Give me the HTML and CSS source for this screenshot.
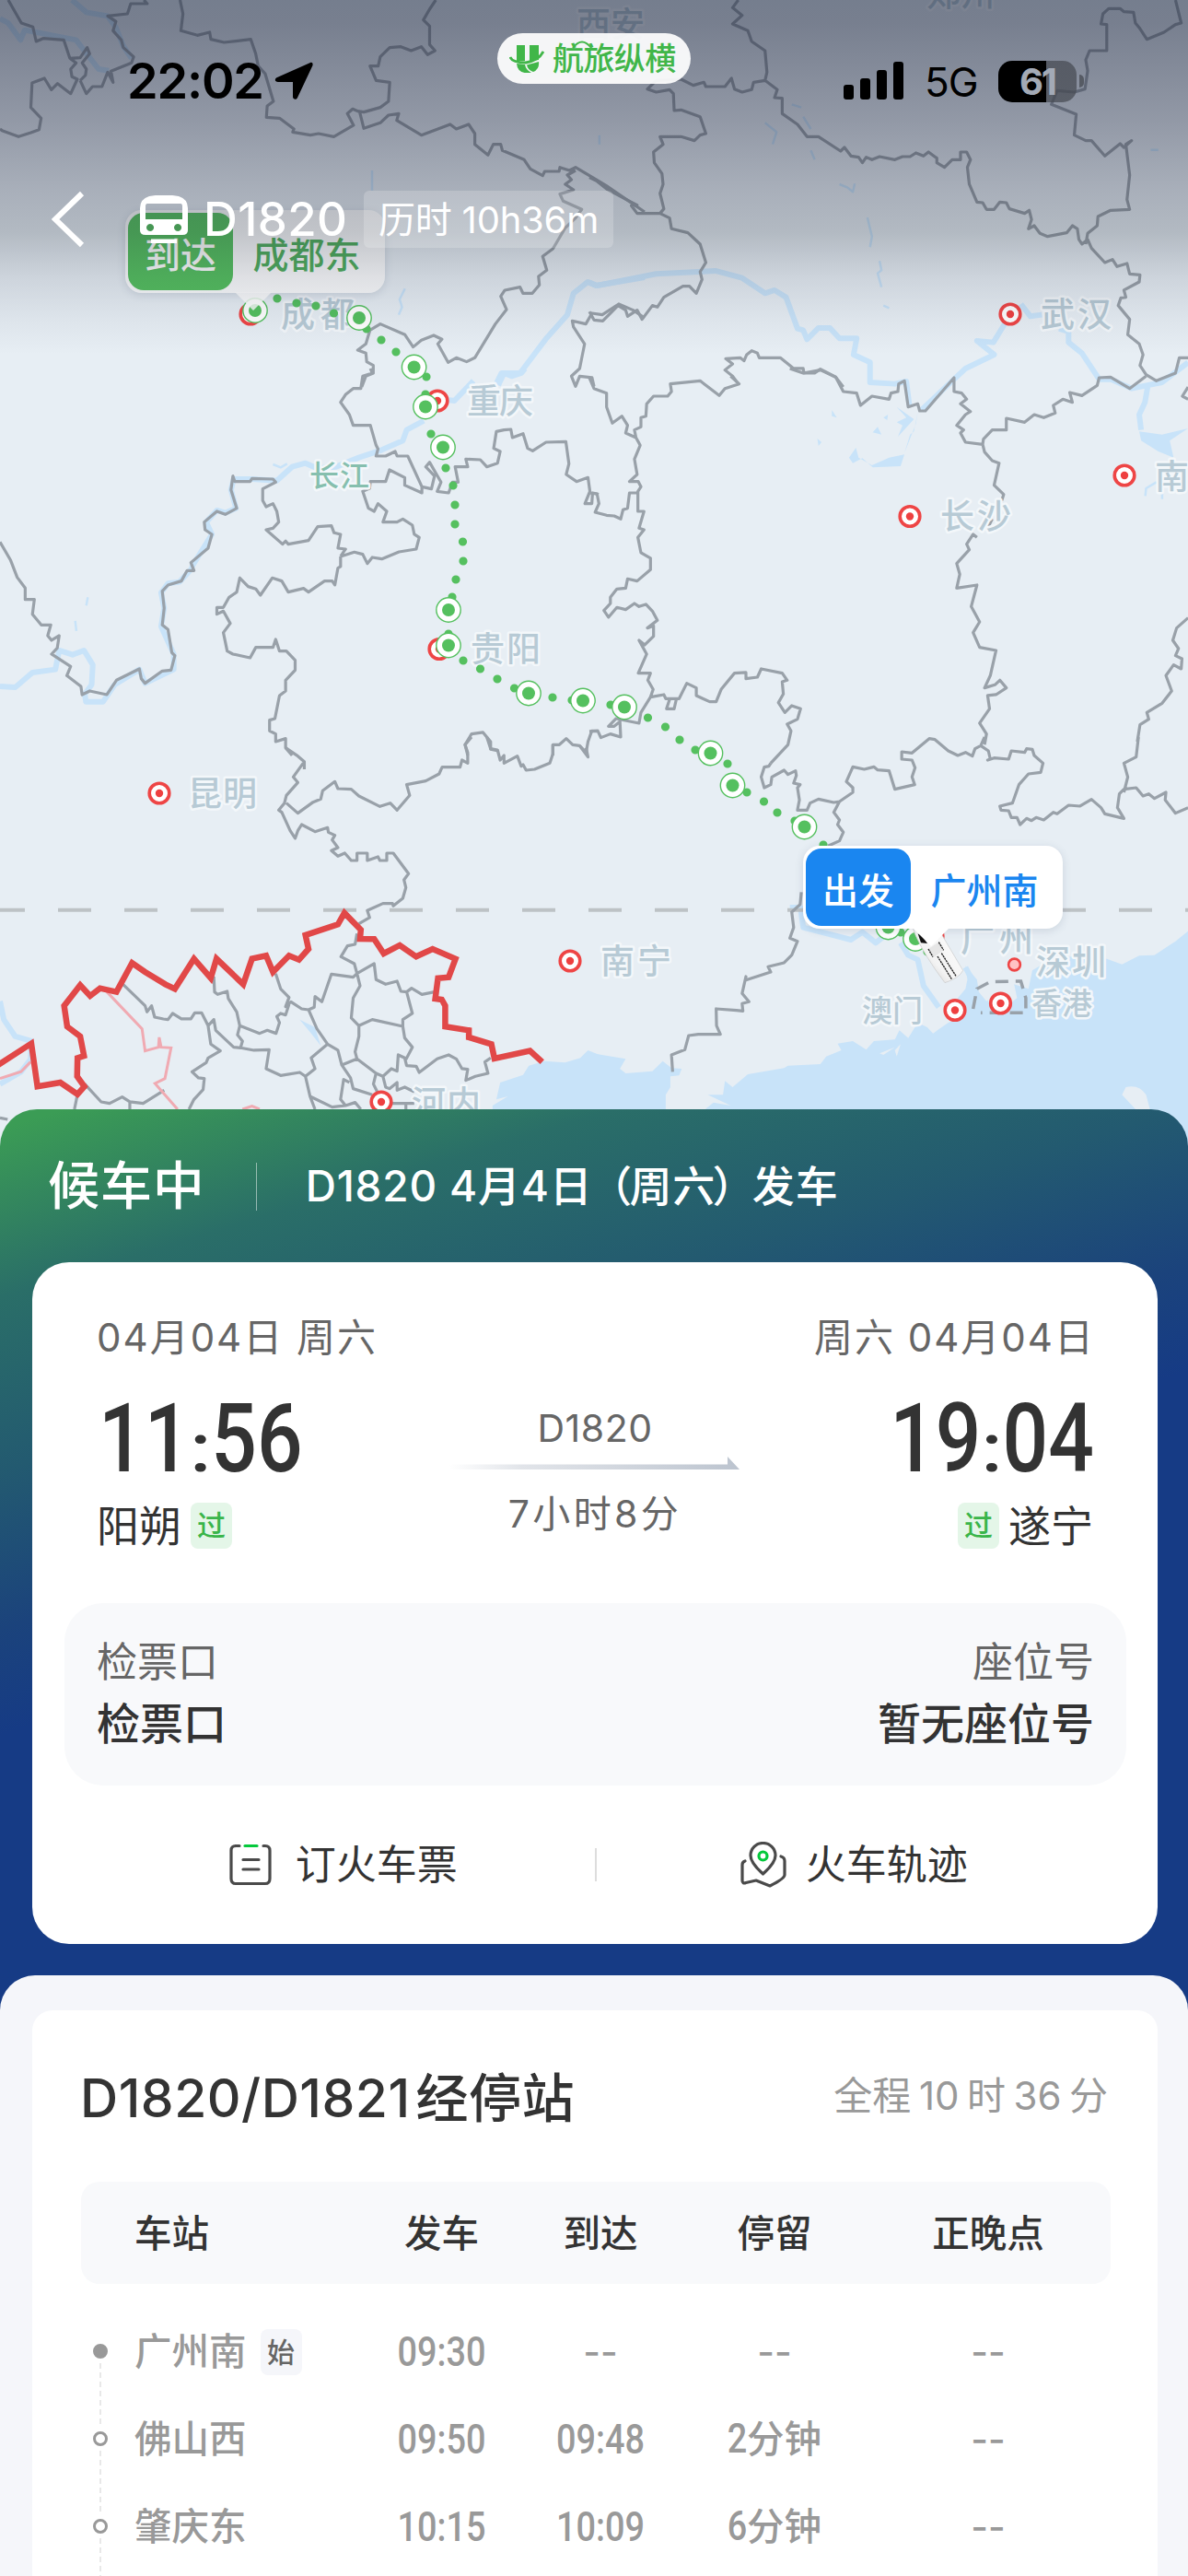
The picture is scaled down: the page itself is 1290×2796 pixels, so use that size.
FILE: index.html
```html
<!DOCTYPE html>
<html lang="zh-CN">
<head>
<meta charset="utf-8">
<title>D1820 列车动态</title>
<link rel="stylesheet" href="styles.css">
</head>
<body>
<main class="page">
  <section class="hero">
    <svg class="map" viewBox="0 0 1290 1270" width="1290" height="1270">
      <defs>
        <g id="stop"><circle r="13.2" fill="#fff" stroke="#55c05f" stroke-width="1.4"/><circle r="7" fill="#55c05f"/></g>
        <g id="city"><circle r="10.8" fill="#fff" stroke="#ee4545" stroke-width="3.6"/><circle r="4.2" fill="#ee4040"/></g>
        <linearGradient id="body" x1="0" y1="1" x2="1" y2="0"><stop offset="0" stop-color="#b5b5b5"/><stop offset=".4" stop-color="#f3f3f3"/><stop offset="1" stop-color="#fff"/></linearGradient>
      </defs>
      <g class="sea">
        <path transform="translate(0 800) scale(.4146 .3333)" d="M1570,1035 L1540,1020 1520,1045 1480,1060 1425,1055 1385,1070 1370,1100 1310,1125 1300,1180 1330,1170 1290,1200 1290,1400 1570,1400Z"/>
        <path transform="translate(640 800) scale(.4146 .3333)" d="M0,1028 L95,1048 80,1080 95,1095 165,1088 192,1055 215,1078 242,1080 235,1102 212,1105 212,1140 200,1165 200,1400 L310,1400 305,1210 325,1190 370,1200 310,1165 350,1165 355,1120 375,1140 415,1098 510,1078 520,1070 605,1065 620,1040 660,1020 650,998 690,990 725,1018 745,990 800,985 812,955 835,980 860,930 885,945 900,965 940,930 960,920 965,850 985,820 990,790 985,745 1015,790 1020,830 1040,860 1100,800 1150,820 1160,760 1200,730 1280,710 1350,720 1395,740 1440,712 1480,710 1535,665 1570,630 V1400 H0Z"/>
        <path transform="translate(640 400) scale(.4146 .3333)" d="M805,125 L850,165 808,222 820,185 805,175 830,160Z M860,140 L850,205 840,215 825,275 855,180Z M680,290 L698,258 705,290 740,315 785,290 825,280 815,318 742,322 715,292 690,308Z M1440,205 L1500,215 1568,195 1520,235 1530,290 1490,270 1445,235Z M742,208 L755,190 765,215Z M770,160 L782,150 780,168Z M597,228 L608,240 600,252Z M635,135 L648,160 635,155Z"/>
        <path transform="translate(0 800) scale(.4146 .3333)" d="M785,920 L825,945 840,1005 815,965Z"/>
      </g>
      <g class="land" transform="translate(640 800) scale(.4146 .3333)">
        <path d="M1405,1140 Q1440,1130 1458,1165 L1468,1212 1440,1225 1395,1165Z M1040,840 L1110,790 1120,850 1090,880 1050,880Z M760,1030 L800,1010 770,1035Z M800,1020 L815,1000 805,1040Z"/>
      </g>
      <g class="river">
        <path transform="scale(.4464 .3333)" d="M0,60 L20,75 50,130 60,98 185,130 205,165 240,225 265,230 M175,0 L210,40 262,52 282,90 300,150 320,190 M1568,903 L1450,930 1430,918 1395,955 1380,1025 1330,1100 1265,1215 1220,1215 1205,1255"/>
        <path transform="translate(640) scale(.4146 .3333)" d="M0,920 L20,930 175,892 330,882 400,905 460,955 485,945 515,968 545,1070 560,1075 570,1105 600,1068 630,1068 655,1102 700,1102 692,1155 735,1180 735,1245 800,1250 830,1242 838,1320 M1090,1050 L1058,1115 1015,1110 1060,1155 985,1200 955,1235 870,1335 M1130,990 L1155,1030 1185,1025 M1230,1070 L1255,1080 1255,1115 1290,1150 1335,1235 1365,1235 1420,1265 1500,1245 1568,1180"/>
        <path transform="translate(0 400) scale(.4146 .3333)" d="M1375,0 L1365,15 1340,25 1320,15 1305,55 M1240,40 L1190,105 1160,100 M1110,170 L1065,200 1055,235 1000,265 940,290 880,320 830,325 800,308 765,320 725,365 660,360 612,360 605,395 618,455 590,470 568,462 540,500 555,540 505,640 500,655 470,695 440,700 422,730 430,780 422,840 455,930 455,980 380,1025 365,980 300,1030 270,1085 225,1085 222,1060 240,1030 243,965 220,918 190,932 155,918 145,980 85,990 40,1038 0,1035"/>
        <path transform="translate(640 400) scale(.4146 .3333)" d="M1462,60 L1455,110 1440,150 1445,200"/>
        <path transform="translate(640 800) scale(.4146 .3333)" d="M525,555 L553,555 560,620 685,660 715,635 750,670 770,650 M815,670 L835,710 860,725 875,810 915,880 M985,750 L1010,810"/>
        <path transform="translate(0 800) scale(.4146 .3333)" d="M0,860 L10,920 40,975 82,990 80,1050 55,1090 0,1130"/>
      </g>
      <g class="river thin">
        <path transform="translate(640) scale(.4146 .3333)" d="M728,708 L740,770 735,805 M760,850 L765,880 755,890 765,935 M655,600 L675,610 690,625 695,598 M480,470 L490,430 460,400 M560,380 L580,420 M530,340 L555,350 M580,490 L590,520 M1470,488 L1490,488 M770,995 L785,1003"/>
        <path transform="scale(.4464 .3333)" d="M985,940 L972,975 978,1000 970,1025 M905,555 V620 M1458,440 V470"/>
        <path transform="translate(0 400) scale(.4146 .3333)" d="M715,312 L735,322 752,310 M230,745 L226,772 M197,822 L200,855"/>
        <path transform="translate(640 400) scale(.4146 .3333)" d="M1485,370 L1458,390 1456,415 M1500,385 L1500,425"/>
      </g>
      <path class="tropic" d="M-9,987.7 H1290"/>
      <g class="border">
        <path transform="scale(.4464 .3333)" d="M20,0 L52,75 80,88 88,135 105,125 155,130 170,190 195,188 212,155 218,175 200,205 210,225 208,245 195,262 M170,190 L185,205 172,225 175,250 188,258 172,305 140,272 125,292 108,255 78,270 75,350 100,385 95,422 75,432 45,445 5,425 0,420 M350,0 L358,12 318,12 310,45 262,52 282,70 275,100 295,130 300,155 325,185 320,205 270,232 275,268 262,235 248,282 225,282 210,305 195,262 M438,0 L445,45 440,100 480,115 510,105 513,128 545,138 610,128 622,175 628,215 645,240 665,330 650,345 648,382 680,385 715,420 712,430 755,440 775,435 812,445 860,408 845,370 858,355 875,365 885,418 925,400 945,375 970,370 965,392 1025,440 1095,405 1110,420 1140,405 1155,435 1155,470 1187,505 1200,470 1218,470 1222,490 1275,520 1290,550 1320,572 1325,558 1360,558 1362,545 1385,555 1400,545 1450,585 1475,605 1568,690 M1060,0 L1045,30 1030,65 1045,85 1045,145 1058,165 1040,178 1025,152 1000,165 975,152 948,155 925,185 920,215 900,215 915,262 948,268 945,330 925,350 885,365 870,362 M1400,555 L1380,570 1390,585 1375,600 1395,618 1362,632 1370,655 1415,682 1400,710 1375,742 1345,810 1320,835 1330,880 1310,900 1312,928 1295,955 1272,955 1265,935 1228,945 1218,965 1232,1008 1205,1055 1155,1165 1135,1178 1110,1165 1090,1180 1065,1120 1075,1105 1055,1092 1025,1108 1005,1130 985,1090 925,1055 900,1075 890,1120 870,1140 890,1150 892,1178 908,1190 908,1215 890,1225 880,1260 M1568,1035 L1540,1010 1505,990 1465,1025 1440,1020 1425,1055 1392,1045 1395,1065 1422,1120 1410,1200 1390,1225 1400,1258 1410,1225 1440,1230 1445,1258"/>
        <path transform="translate(640) scale(.4146 .3333)" d="M390,0 L375,25 400,50 375,78 415,100 425,135 460,165 465,235 460,262 430,268 425,292 400,300 380,290 372,255 355,282 305,282 300,268 272,278 240,258 175,262 152,290 175,300 210,292 220,305 222,360 240,358 290,380 305,435 290,440 275,458 240,445 185,445 193,470 168,495 170,530 190,565 193,600 185,630 195,680 185,695 125,695 110,670 125,668 105,655 45,615 20,590 0,578 M460,262 L492,292 485,318 505,320 505,370 545,405 570,445 600,445 658,492 668,480 685,508 705,512 715,530 725,512 740,520 760,510 800,520 820,510 840,510 855,498 875,508 888,495 910,515 910,530 930,545 950,520 972,520 972,495 988,495 998,520 990,545 995,600 1015,658 1030,660 1040,682 1060,682 1075,658 1092,660 1100,680 1140,695 1152,685 1158,715 1150,745 1165,735 1180,760 1200,770 1250,758 1265,735 1278,745 1282,780 1290,795 1305,780 1315,808 1350,855 1370,845 1382,868 1408,858 1415,892 1442,895 1440,918 1400,945 1405,968 1392,970 1385,995 1415,1040 1410,1090 1440,1120 1450,1155 1442,1190 1458,1220 1485,1240 1535,1215 1545,1165 1568,1165 M185,695 L210,710 215,745 258,758 290,795 305,855 290,885 295,910 280,955 262,932 245,932 195,968 178,1000 165,995 138,1040 125,1010 100,1030 95,1010 75,995 35,1045 12,1042 0,1015 M1535,0 L1550,75 1535,80 1505,105 1460,128 1440,90 1430,75 1425,40 1400,38 1390,28 1360,28 1345,45 1340,78 1355,80 1355,165 1310,165 1300,195 1305,230 1298,290 1270,300 1225,295 1210,340 1275,372 1270,440 1300,458 1315,458 1350,508 1390,468 1400,480 1420,458 1405,470 1415,570 1408,650 1415,682 1365,685 1332,705 1330,735 1305,760 1300,795 M665,1260 L645,1228 605,1202 590,1215 562,1215 560,1200 535,1200 500,1165 445,1165 440,1150 425,1142 412,1155 405,1175 395,1165 357,1168 375,1185 355,1205 375,1225 390,1250"/>
        <path transform="translate(0 400) scale(.4146 .3333)" d="M970,0 L975,15 950,25 945,65 925,65 905,85 892,110 915,150 925,185 970,185 985,250 990,262 985,285 1010,285 1035,270 1040,285 1068,285 1105,385 1105,405 1060,380 1060,355 1020,330 1010,368 970,368 968,390 950,400 965,455 980,465 990,440 1013,465 1003,500 1040,500 1055,490 1080,510 1085,540 1098,550 1090,588 1045,597 1000,620 975,615 962,635 950,605 928,598 892,612 M1105,385 L1130,392 1138,350 1115,320 1125,305 1155,370 1145,400 1175,405 1185,370 1200,370 1192,320 1225,320 1220,295 1258,297 1275,320 1303,308 1310,270 1293,260 1300,205 1320,200 1338,198 1342,225 1370,212 1382,260 1395,268 1430,240 1482,238 1490,310 1483,345 1510,368 1540,355 1545,400 1532,440 1550,440 1552,405 1568,410 M892,612 L905,588 885,585 892,540 875,535 868,512 832,515 808,560 755,572 748,562 740,572 697,525 715,520 730,500 725,465 715,440 697,450 688,430 688,392 722,370 715,360 660,358 655,368 615,368 610,350 605,395 620,455 590,475 568,465 535,500 537,525 555,540 545,585 500,632 508,658 490,658 475,692 440,705 425,725 430,780 425,835 440,850 450,925 458,935 448,982 425,985 380,1025 370,1010 365,978 305,1015 280,1062 235,1050 215,1062 212,1035 175,1000 185,970 135,930 150,910 155,870 135,885 125,870 133,835 108,835 85,800 90,752 66,752 66,715 45,680 28,625 0,565 M892,612 L892,645 885,650 877,705 870,692 850,692 808,728 795,716 755,728 738,692 713,682 682,738 670,718 650,710 628,682 620,728 600,745 585,778 568,778 568,800 585,790 603,830 585,860 595,920 610,930 655,942 670,908 715,908 722,882 732,920 750,920 773,950 773,982 748,1015 748,1050 732,1065 720,1140 706,1145 706,1180 722,1190 722,1215 748,1205 748,1235 765,1260 M1225,1260 L1218,1225 1235,1190 1265,1185 1285,1215 1285,1240 1305,1245 M1448,1260 L1448,1225 1465,1225 1483,1205 1500,1225 1518,1228 1535,1250 1540,1215 1550,1180 1568,1180"/>
        <path transform="translate(640 400) scale(.4146 .3333)" d="M370,25 L392,50 355,65 340,88 290,40 212,50 215,75 205,90 168,90 150,115 148,155 135,160 135,190 118,200 122,225 M0,30 L12,65 45,80 45,125 60,178 85,155 100,185 95,210 122,225 133,250 118,295 125,345 105,368 128,368 135,385 127,400 127,465 143,465 130,520 143,525 127,550 135,600 160,618 160,655 125,692 100,685 95,715 72,718 55,745 55,765 38,788 50,810 72,778 95,785 118,765 130,775 148,768 165,790 178,820 152,845 168,838 168,872 145,900 130,885 150,930 128,992 160,992 153,1015 167,1045 160,1070 M127,405 L105,405 100,455 88,460 82,490 65,480 45,478 15,468 25,440 20,408 0,405 M160,1070 L195,1062 200,1075 235,1075 255,1025 280,1040 280,1065 297,1075 315,1085 332,1085 345,1045 380,992 410,990 410,1010 440,1005 450,978 505,992 518,1015 505,1020 508,1060 495,1088 512,1120 530,1098 553,1108 545,1142 518,1158 528,1180 520,1225 475,1285 M228,1075 L222,1108 202,1108 210,1078 M160,1070 L135,1120 130,1155 70,1140 50,1165 65,1165 80,1150 82,1200 55,1190 30,1202 22,1180 0,1182 M525,0 L560,15 605,5 645,28 665,75 700,80 710,120 740,90 785,100 790,80 808,75 810,50 825,40 835,125 860,115 865,138 880,138 955,30 955,75 975,80 988,100 972,115 998,140 985,150 962,185 980,200 972,210 985,240 1030,247 1035,272 1055,300 1073,308 1060,380 1085,410 1080,430 M1030,247 L1032,230 1055,200 1092,200 1092,162 1140,175 1165,150 1190,160 1220,145 1215,120 1240,100 1265,110 1258,78 1290,88 1330,55 1335,30 1365,28 1415,65 1458,25 M1055,490 L1045,515 M1015,550 L1005,540 988,572 995,590 962,635 970,670 962,715 1015,705 1000,775 1022,825 1005,860 1022,908 1065,918 1050,1000 1035,1040 1062,1030 1075,1015 1092,1040 1065,1062 1043,1065 1048,1108 1022,1155 1040,1190 1035,1225 M1568,812 L1538,845 1528,885 1543,912 1535,935 1552,945 1550,978 1530,965 1510,1000 1525,1050 1500,1090 1460,1120 1465,1142 1442,1160 1435,1215 M1568,60 L1553,90 1568,100"/>
        <path transform="translate(0 800) scale(.4146 .3333)" d="M748,35 L780,62 797,80 797,105 M797,80 L768,130 780,148 750,190 745,215 730,238 738,245 760,305 773,330 780,305 790,285 825,308 858,295 860,310 877,320 870,335 885,360 868,370 885,388 903,378 920,402 935,402 935,378 962,378 962,402 990,390 995,402 1013,402 1013,378 1030,378 1070,445 1058,465 1063,490 1055,525 1030,550 1028,542 1003,542 962,565 968,588 940,608 M750,215 L780,248 820,212 840,202 845,175 877,145 885,168 920,170 940,192 995,226 1022,215 1040,238 1073,190 1065,155 1115,143 1150,120 1158,98 1205,98 1210,75 1225,85 1225,50 1218,25 1235,0 M1275,0 L1285,38 1303,42 1310,75 1320,60 1320,85 1355,62 1365,95 1370,90 1378,108 1400,105 1440,85 1448,55 1448,25 M1518,28 L1540,65 1535,35 M935,640 L930,675 910,680 893,715 928,738 935,770 925,782 868,772 843,862 825,845 823,880 808,888 790,885 762,862 748,878 757,848 735,820 722,770 M935,770 L980,738 985,790 1010,805 1040,795 1050,828 1065,830 1078,818 1105,838 1138,830 M1065,830 L1080,900 1055,920 1055,942 975,920 940,940 920,915 925,850 943,810 935,770 M940,940 L940,975 930,1025 935,1048 895,1068 885,1020 858,1000 830,950 808,888 M935,1048 L985,1095 1003,1105 1025,1080 1040,1088 1043,1035 1060,1045 1065,1070 1090,1072 1098,1092 1145,1048 1175,1035 1195,1048 1210,1080 1225,1082 1220,1118 1245,1105 1278,1095 1270,1058 1285,1045 M1055,942 L1060,980 1080,1010 1063,1050 M985,1095 L978,1130 988,1155 M1003,1105 L1010,1140 1020,1145 1040,1125 1040,1150 1060,1140 1085,1155 M895,1068 L918,1110 925,1145 975,1165 M915,1125 L900,1115 892,1180 905,1200 870,1205 812,1170 800,1105 825,1080 815,1045 858,1000 M800,1105 L785,1092 735,1102 697,1080 705,1018 665,1020 630,1012 612,1010 565,955 560,920 545,940 552,1000 577,1022 545,1045 540,1060 503,1090 520,1110 535,1112 532,1148 508,1180 495,1212 M560,780 L562,830 570,838 595,828 598,852 620,895 628,940 622,970 635,990 630,1012 M628,940 L680,965 700,955 723,965 732,930 725,910 735,900 748,905 757,870 M322,805 L380,875 385,895 397,875 405,912 428,918 440,920 452,900 475,918 500,918 510,898 528,898 545,940 M222,1130 L265,1188 287,1193 320,1172 340,1188 375,1193 430,1150 M340,1188 V1212 M203,1163 L195,1212 M0,1240 L20,1245 M812,1170 L825,1212 M905,1200 L930,1190 945,1212 M1025,1193 H1085 M1063,1195 V1212"/>
        <path transform="translate(640 800) scale(.4146 .3333)" d="M475,85 L470,95 458,98 450,130 458,165 475,155 478,130 510,108 520,122 540,110 542,125 535,150 552,155 545,165 550,205 545,238 570,238 578,215 600,202 640,213 655,210 640,245 655,270 650,285 665,310 655,338 625,355 M655,210 L690,180 690,165 673,145 690,97 720,105 745,97 755,107 785,110 800,170 852,155 845,130 853,100 845,75 818,72 818,48 845,52 890,5 905,8 940,45 965,60 985,50 1003,62 1010,38 1025,28 1045,45 1050,72 1043,75 1060,68 1098,72 1105,45 1140,50 1145,38 1160,40 1165,60 1188,85 1182,115 1150,120 1125,155 1108,215 1075,225 1078,238 1098,240 1105,262 1120,262 1128,285 1145,265 1158,272 1170,262 1190,270 1215,245 1225,250 1255,222 1285,225 1315,203 1340,230 1350,250 1400,265 1383,230 1388,185 1400,170 1432,165 1450,192 1465,185 1480,200 1510,180 1508,205 1535,248 1568,230 M1438,0 L1432,65 1400,85 1410,130 1400,180 M1025,28 L1035,0 M555,505 L552,545 530,570 535,620 525,655 545,665 530,710 510,735 468,748 475,765 408,792 410,780 400,835 418,862 400,868 402,892 385,890 332,885 333,940 343,968 285,968 260,972 250,1018 215,1035 218,1090"/>
      </g>
      <path class="hk" transform="translate(640 800) scale(.4146 .3333)" d="M1005,885 L1015,820 1050,797 1130,795 1143,850 1143,898 1025,898"/>
      <path class="pink" transform="translate(0 800) scale(.4146 .3333)" d="M280,830 L372,950 380,1022 415,1010 417,978 422,1010 448,1012 432,1112 406,1128 465,1212 M80,1058 L55,1090 0,1112 M635,1212 L660,1202 680,1212"/>
      <path class="frontier" transform="translate(0 800) scale(.4146 .3333)" d="M-5,1068 L82,998 98,1138 158,1125 203,1163 221,1138 202,1105 203,1045 220,1038 210,975 176,943 168,875 210,808 236,843 262,818 305,830 346,736 380,765 433,805 458,820 508,722 552,785 567,722 637,805 660,722 697,712 715,765 757,712 783,725 808,690 800,645 885,610 902,573 945,628 943,657 980,658 1005,705 1047,678 1090,715 1133,690 1193,722 1175,782 1147,785 1140,852 1157,855 1166,875 1166,943 1228,955 1228,978 1287,1000 1295,1047 1388,1022 1420,1058"/>
      <use href="#city" x="1097" y="341"/><use href="#city" x="1221" y="516"/><use href="#city" x="988" y="560.5"/><use href="#city" x="173" y="861"/><use href="#city" x="619" y="1043"/><use href="#city" x="475" y="435"/><use href="#city" x="477" y="704.5"/><use href="#city" x="272" y="341"/><use href="#city" x="414" y="1196"/><use href="#city" x="1037" y="1096.5"/><use href="#city" x="1086.5" y="1089"/><use href="#city" x="1013" y="1016"/>
      <circle cx="1101.5" cy="1047" r="6.4" fill="#ffc2c4" stroke="#ee4545" stroke-width="2.6"/>
      <g class="labels">
        <text x="305" y="355" textLength="80">成都</text><text x="507" y="449" textLength="72">重庆</text><text x="511" y="718" textLength="76">贵阳</text><text x="204" y="875" textLength="75">昆明</text><text x="652" y="1057" textLength="77">南宁</text><text x="1021" y="574" textLength="77">长沙</text><text x="1130" y="355" textLength="77">武汉</text><text x="1254" y="531">南</text><text x="1125" y="1058" textLength="76">深圳</text><text class="sm" x="1120" y="1101">香港</text><text class="sm" x="936" y="1109">澳门</text><text x="1043" y="1033">广</text><text x="1085" y="1033">州</text><text x="447" y="1211" textLength="75">河内</text><text x="626" y="40">西安</text><text x="1006" y="7">郑州</text><text class="water" x="336" y="528" textLength="65">长江</text>
      </g>
      <path class="dots" d="M301,324h0M322,329h0M343,332h0M362.5,340h0M398,357h0M414,369h0M430,382h0M463,409h0M462,428h0M468,471h0M484,508h0M492,527h0M494,548h0M494,569h0M502.5,588h0M503,609h0M495,629h0M491,648h0M487,688h0M503,717h0M521.5,726h0M540,737h0M558.5,747h0M600,757h0M621,760h0M663,765h0M703.5,779h0M722.5,789h0M738,803h0M755,814h0M790,829h0M811,860h0M829.5,870h0M844,882h0M863,891h0M894,917h0M978,1012h0M1007,1033h0"/>
      <use href="#stop" x="277" y="337"/><use href="#stop" x="390" y="345"/><use href="#stop" x="449.6" y="398.5"/><use href="#stop" x="462" y="441.5"/><use href="#stop" x="481" y="485.5"/><use href="#stop" x="487" y="662"/><use href="#stop" x="487" y="700.5"/><use href="#stop" x="574" y="752.5"/><use href="#stop" x="633" y="760.5"/><use href="#stop" x="678" y="767.5"/><use href="#stop" x="771.5" y="817.5"/><use href="#stop" x="795.5" y="852.5"/><use href="#stop" x="873.5" y="897.5"/><use href="#stop" x="964.5" y="1006.5"/><use href="#stop" x="994" y="1019"/>
      <g transform="translate(860 910) scale(.3333)">
        <path fill="url(#body)" stroke="#c9c9c9" stroke-width="2" d="M392,285 L480,300 557,430 Q545,455 498,470 Q430,380 400,310Z"/>
        <path fill="#111" d="M410,310 L425,318 441,342 420,340Z"/>
        <path fill="#e6e6e6" d="M444,360 L478,338 494,364 462,386Z"/>
        <path fill="none" stroke="#222" stroke-width="4" stroke-dasharray="7 2" d="M444,360 L459,386 M478,338 L494,364 M474,384 L520,458 M487,374 L534,448"/>
      </g>
    </svg>

    <div class="pin arrive"><span class="kind">到达</span><span class="place">成都东</span></div>
    <div class="pin depart"><span class="kind">出发</span><span class="place">广州南</span></div>
    <div class="shade"></div>

    <div class="statusbar">
      <span class="clock">22:02</span>
      <svg class="loc" viewBox="0 0 42 42" width="42" height="42"><path d="M39,1 C41,0 42,2 41.500,4 L25,39 C24,42 20,41 20,38 V22 H4 C0,22 0,18 3,17Z"/></svg>
      <span class="brand">
        <svg viewBox="0 0 38 30" width="38" height="30"><path fill="#41b649" d="M8,0 H17 V17 H8Z M22,0 H32 V16 L22,17Z M8,20 L17,21 Q18,27 24,30 Q9,32 8,20Z M19,21.500 L32,18 Q33,26 26,29 Q20,27 19,21.500Z"/><path fill="none" stroke="#41b649" stroke-width="2.800" d="M1,13 Q3,19 18,19 Q32,17 37,7"/></svg>
        <span class="brandname">航旅纵横<svg class="arc" viewBox="0 0 22 8" width="22" height="8"><path d="M1,8 Q11,-5 21,8" fill="none" stroke="#41b649" stroke-width="1.800"/></svg></span>
      </span>
      <svg class="signal" viewBox="0 0 66 42" width="66" height="42"><rect y="25" width="11" height="16" rx="3"/><rect x="18" y="18" width="11" height="23" rx="3"/><rect x="36" y="9" width="11" height="32" rx="3"/><rect x="54" width="11" height="41" rx="3"/></svg>
      <span class="net">5G</span>
      <span class="battery"><b>61</b></span><i class="nub"></i>
    </div>

    <header class="topbar">
      <svg class="back" viewBox="0 0 36 62" width="36" height="62"><path d="M33,3 L4,31 33,59" fill="none" stroke="#fff" stroke-width="6"/></svg>
      <svg class="bus" viewBox="0 0 52 52" width="52" height="52"><path fill="#fff" fill-rule="evenodd" d="M10,1 Q26,-2 42,1 Q52,4 52,14 V38 Q52,43 46,43 H6 Q0,43 0,38 V14 Q0,4 10,1Z M8,9 Q6,9 6,12 V26 H46 V12 Q46,9 44,9Z M11,31 a4,4 0 1,0 .1,0Z M41,31 a4,4 0 1,0 .1,0Z"/><path d="M12,50 H40" stroke="#fff" stroke-width="5"/></svg>
      <h1>D1820</h1>
      <span class="elapsed">历时 10h36m</span>
    </header>
  </section>

  <section class="trip">
    <div class="triphead"><strong>候车中</strong><i></i><span>D1820 4月4日<b>（</b>周六<b>）</b>发车</span></div>
    <div class="card">
      <div class="legs">
        <div class="leg">
          <span class="date">04月04日 周六</span>
          <span class="time">11<i>:</i>56</span>
          <span class="stn">阳朔<em>过</em></span>
        </div>
        <div class="mid">
          <span class="no">D1820</span>
          <svg viewBox="0 0 316 15" width="316" height="15"><defs><linearGradient id="fade"><stop offset="0" stop-color="#c3c9d3" stop-opacity="0"/><stop offset=".25" stop-color="#c3c9d3" stop-opacity=".5"/><stop offset="1" stop-color="#bcc4cf"/></linearGradient></defs><path fill="url(#fade)" d="M0,8.500 H302 V0 L315,14 H0Z"/></svg>
          <span class="dur">7小时8分</span>
        </div>
        <div class="leg right">
          <span class="date">周六 04月04日</span>
          <span class="time">19<i>:</i>04</span>
          <span class="stn"><em>过</em>遂宁</span>
        </div>
      </div>
      <div class="info">
        <div><span>检票口</span><b>检票口</b></div>
        <div class="right"><span>座位号</span><b>暂无座位号</b></div>
      </div>
      <div class="actions">
        <a class="book"><svg viewBox="0 0 46 46" width="46" height="46" fill="none" stroke="#4a4a4a" stroke-width="3.200" stroke-linecap="round"><path d="M11,2.500 H7 Q2,2.500 2,7.500 V38 Q2,43.500 7,43.500 H39 Q44,43.500 44,38 V7.500 Q44,2.500 39,2.500 H37 M15,17.500 H32 M15,28 H32"/><path stroke="#05c93c" d="M17,2.500 H30"/></svg>订火车票</a>
        <i></i>
        <a class="track"><svg viewBox="0 0 50 50" width="50" height="50" fill="none" stroke="#4a4a4a" stroke-width="3.200" stroke-linecap="round" stroke-linejoin="round"><path d="M24.500,35 Q11,23 11,15 A13.500,13.500 0 0 1 38,15 Q38,23 24.500,35Z M5,21 Q2,22 2,25 V42 Q2,46 6,44.500 L17,42 32,48 Q48,40 48,36 V21 Q48,17 44,16"/><circle cx="24.500" cy="15.500" r="4.500" stroke="#05c93c"/></svg>火车轨迹</a>
      </div>
    </div>
  </section>

  <section class="below">
    <div class="stops">
      <div class="title"><h2>D1820/D1821<b>经停站</b></h2><span>全程<b>10</b>时<b>36</b>分</span></div>
      <div class="row head"><span>车站</span><span>发车</span><span>到达</span><span>停留</span><span>正晚点</span></div>
      <div class="row first"><span>广州南<em>始</em></span><span class="n">09:30</span><span>--</span><span>--</span><span>--</span></div>
      <div class="row"><span>佛山西</span><span class="n">09:50</span><span class="n">09:48</span><span><b class="n">2</b>分钟</span><span>--</span></div>
      <div class="row"><span>肇庆东</span><span class="n">10:15</span><span class="n">10:09</span><span><b class="n">6</b>分钟</span><span>--</span></div>
    </div>
  </section>
</main>
</body>
</html>
```
FILE: styles.css
```css
*, *::before, *::after { box-sizing: border-box; }
body { margin: 0; font-family: Inter, "Noto Sans CJK SC", sans-serif; color: #333; background: #f5f6fa; }
em, i, b { font-style: normal; }
h1, h2 { margin: 0; font-weight: 500; }
.page { width: 1290px; height: 2796px; overflow: hidden; display: flex; flex-direction: column; }

/* map */
.hero { position: relative; height: 1270px; flex: none; background: #e7eef4; }
.map { display: block; }
.sea path { fill: #c8e3f9; }
.land path { fill: #e7eef4; }
.river path { fill: none; stroke: #c8e3f9; stroke-width: 6; vector-effect: non-scaling-stroke; stroke-linejoin: round; }
.river.thin path { stroke-width: 2.5; }
.border path { fill: none; stroke: #99a1a9; stroke-width: 3.2; vector-effect: non-scaling-stroke; stroke-linejoin: round; }
.tropic { stroke: #bdc2c5; stroke-width: 4; stroke-dasharray: 36 36; }
.hk { fill: none; stroke: #99a1a9; stroke-width: 3.5; stroke-dasharray: 14 8; vector-effect: non-scaling-stroke; }
.pink { fill: none; stroke: #f0aab2; stroke-width: 3; vector-effect: non-scaling-stroke; }
.frontier { fill: none; stroke: #e14848; stroke-width: 6.5; vector-effect: non-scaling-stroke; }
.labels text { font: 500 37px "Noto Sans CJK SC", sans-serif; fill: #b7cad5; stroke: #f3f7fa; stroke-width: 5px; paint-order: stroke; stroke-linejoin: round; }
.labels .sm { font-size: 33px; }
.labels .water { font-size: 32px; fill: #86bfae; }
.dots { stroke: #55c05f; stroke-width: 9.2; stroke-linecap: round; }
.shade { position: absolute; inset: 0 0 auto; height: 385px; background: linear-gradient(rgba(28,38,62,.56) 0, rgba(28,36,60,.55) 25px, rgba(28,34,58,.42) 130px, rgba(28,34,56,.31) 205px, rgba(28,36,52,.26) 252px, rgba(28,34,56,.13) 300px, rgba(28,36,60,.05) 345px, transparent 385px); }

.pin { position: absolute; display: flex; align-items: center; height: 90px; padding: 3px; background: #fff; border-radius: 18px; box-shadow: 0 2px 10px rgba(60,80,110,.16); font-size: 39px; font-weight: 500; }
.pin::after { content: ""; position: absolute; top: 89px; left: 119px; border: 20px solid transparent; border-top-color: #fff; border-bottom: 0; }
.pin .kind { width: 114px; height: 84px; line-height: 92px; text-align: center; color: #fff; border-radius: 17px; }
.pin .place { flex: 1; text-align: center; line-height: 92px; padding: 8px 2px 0 0; }
.arrive { left: 136px; top: 228px; width: 282px; background: rgba(255,255,255,.82); }
.arrive::after { border-top-color: rgba(255,255,255,.82); }
.arrive .kind { background: #55c05f; }
.arrive .place { color: #4fae5d; }
.depart { left: 872px; top: 918px; width: 282px; }
.depart .kind { background: #1a86f0; }
.depart .place { color: #1a86f0; }

/* status bar */
.statusbar { position: absolute; inset: 0 0 auto; height: 176px; display: flex; align-items: center; color: #000; }
.clock { width: 160px; margin-left: 138px; font-size: 54px; font-weight: 600; letter-spacing: -1.2px; line-height: 64px; }
.brand { position: absolute; left: 540px; top: 36px; display: flex; align-items: center; gap: 9px; width: 210px; height: 55px; padding-left: 13px; border-radius: 28px; background: rgba(255,255,255,.92); }
.brandname { position: relative; font-size: 34px; line-height: 55px; font-weight: 500; color: #41b649; letter-spacing: -.6px; }
.arc { position: absolute; left: 21px; top: 8px; }
.signal { margin-left: 576px; }
.net { margin-left: 22px; font-size: 44px; font-weight: 400; line-height: 60px; letter-spacing: -1px; width: 58px; padding-top: 1px; }
.battery { margin-left: 22px; width: 85px; height: 45px; border-radius: 15px; background: linear-gradient(90deg, #000 52px, rgba(70,74,82,.72) 52px); text-align: center; font-size: 40px; line-height: 45px; letter-spacing: -2px; }
.battery b { color: #a3aab6; font-weight: 700; }
.nub { width: 5px; height: 14px; margin-left: 3px; border-radius: 0 5px 5px 0; background: rgba(70,74,82,.75); }

/* top bar */
.topbar { position: absolute; left: 56px; top: 207px; height: 62px; display: flex; align-items: center; color: #fff; }
.bus { margin-left: 60px; }
.topbar h1 { width: 171px; padding-left: 17px; font-size: 51px; line-height: 62px; letter-spacing: .4px; white-space: nowrap; }
.elapsed { margin-left: 20px; width: 271px; height: 62px; line-height: 64px; border-radius: 6px; text-align: center; background: rgba(255,255,255,.2); font-size: 40px; font-weight: 400; letter-spacing: -.2px; white-space: nowrap; }

/* trip */
.trip { position: relative; margin-top: -66px; height: 990px; flex: none; padding: 0 33px 0 35px; border-radius: 40px 40px 0 0; background: linear-gradient(163deg, #3b9c55 20px, #2a6e68 195px, #235a70 375px, #1b437c 540px, #163b85 650px); color: #fff; }
.triphead { height: 166px; display: flex; align-items: center; padding: 0 0 0 17px; white-space: nowrap; }
.triphead strong { font-size: 56px; font-weight: 500; line-height: 80px; letter-spacing: .9px; }
.triphead i { width: 1px; height: 52px; margin: 2px 53px 0 55px; background: rgba(255,255,255,.5); }
.triphead span { font-size: 46px; font-weight: 500; line-height: 70px; letter-spacing: .8px; }
.triphead b { font-weight: 500; margin: 0 -3.5px; }
.card { height: 740px; padding: 0 34px 0 35px; border-radius: 40px; background: #fff; color: #333; }
.legs { height: 370px; display: grid; grid-template-columns: 1fr 320px 1fr; padding: 52px 36px 0 35px; }
.leg { display: flex; flex-direction: column; }
.leg.right, .info .right { align-items: flex-end; }
.date { height: 60px; line-height: 60px; font-size: 42px; color: #666; letter-spacing: 2px; white-space: nowrap; }
.right .date { margin-right: -2px; }
.time { height: 120px; padding-top: 18px; font: 500 104px/124px Roboto, sans-serif; transform: scaleX(.84); transform-origin: 0 50%; margin-left: 2px; }
.time i { display: inline-block; transform: scaleY(.72); transform-origin: 50% 97px; }
.right .time { transform-origin: 100% 50%; margin: 0 -1px 0 0; }
.stn { display: flex; align-items: center; gap: 10px; height: 60px; margin-top: 24px; font-size: 46px; line-height: 60px; }
.stn em { width: 45px; height: 50px; border-radius: 8px; background: #e4f6e8; color: #3ab54a; font-size: 31px; line-height: 50px; text-align: center; font-weight: 500; }
.mid { display: flex; flex-direction: column; align-items: center; padding-top: 103px; color: #666; }
.no { height: 50px; line-height: 50px; font-size: 41px; letter-spacing: .5px; }
.mid svg { margin-top: 6px; }
.dur { margin-top: 21px; font-size: 41px; line-height: 52px; letter-spacing: 3.4px; }
.info { height: 198px; border-radius: 42px; background: #f8f9fb; display: flex; justify-content: space-between; padding: 34px 35px 34px 35px; }
.info div { display: flex; flex-direction: column; }
.info span { font-size: 44px; line-height: 60px; color: #666; }
.info b { font-size: 47px; line-height: 74px; font-weight: 500; }
.actions { height: 172px; display: grid; grid-template-columns: minmax(0,1fr) 2px minmax(0,1fr); align-items: center; }
.actions a { display: flex; align-items: center; justify-content: center; font-size: 44px; line-height: 60px; }
.actions .book { gap: 26px; padding-left: 30px; }
.actions .track { gap: 21px; padding-right: 16px; }
.actions i { height: 36px; background: #ddd; }

/* stop list */
.below { position: relative; margin-top: -50px; flex: 1; padding: 38px 33px 0 35px; border-radius: 38px 38px 0 0; background: #f5f6fa; }
.stops { height: 660px; padding: 0 51px 0 53px; border-radius: 22px 22px 0 0; background: #fff; }
.title { height: 186px; display: flex; justify-content: space-between; align-items: center; padding: 5px 3px 0 0; }
.title h2 { font-size: 57px; line-height: 80px; letter-spacing: .5px; margin-left: -1px; }
.title h2 b { font-weight: 500; margin-left: 6px; }
.title span { font-size: 42px; line-height: 60px; color: #999; margin-top: -6px; }
.title span b { font-weight: 400; margin: 0 8.5px; }
.row { position: relative; display: grid; grid-template-columns: 248px 172px 172px 206px 1fr; height: 95px; padding: 0 4px 0 58px; align-items: center; font-size: 40.5px; line-height: 60px; font-weight: 500; color: #999; text-align: center; }
.row > span:first-child { display: flex; align-items: center; }
.row > span:nth-child(2) { margin-left: -1px; }
.row.head { height: 111px; margin-bottom: 26px; border-radius: 20px; background: #f8f9fb; color: #333; padding-top: 2px; }
.row em { width: 45px; height: 50px; margin-left: 15px; border-radius: 8px; background: #f5f6fa; color: #666; font-size: 30px; line-height: 50px; text-align: center; }
.n { display: inline-block; font: 500 44px/60px Roboto, sans-serif; transform: scaleX(.86); }
.row b.n { margin: 0 -2px; }
.row:not(.head)::before { content: ""; position: absolute; left: 13px; top: 39px; width: 16px; height: 16px; border: 3px solid #999; border-radius: 50%; background: #fff; }
.row.first::before { background: #999; }
.row:not(.head)::after { content: ""; position: absolute; left: 20px; top: 60px; width: 2px; height: 70px; background: repeating-linear-gradient(#e8e8e8 0 6px, transparent 6px 10px); }
```
